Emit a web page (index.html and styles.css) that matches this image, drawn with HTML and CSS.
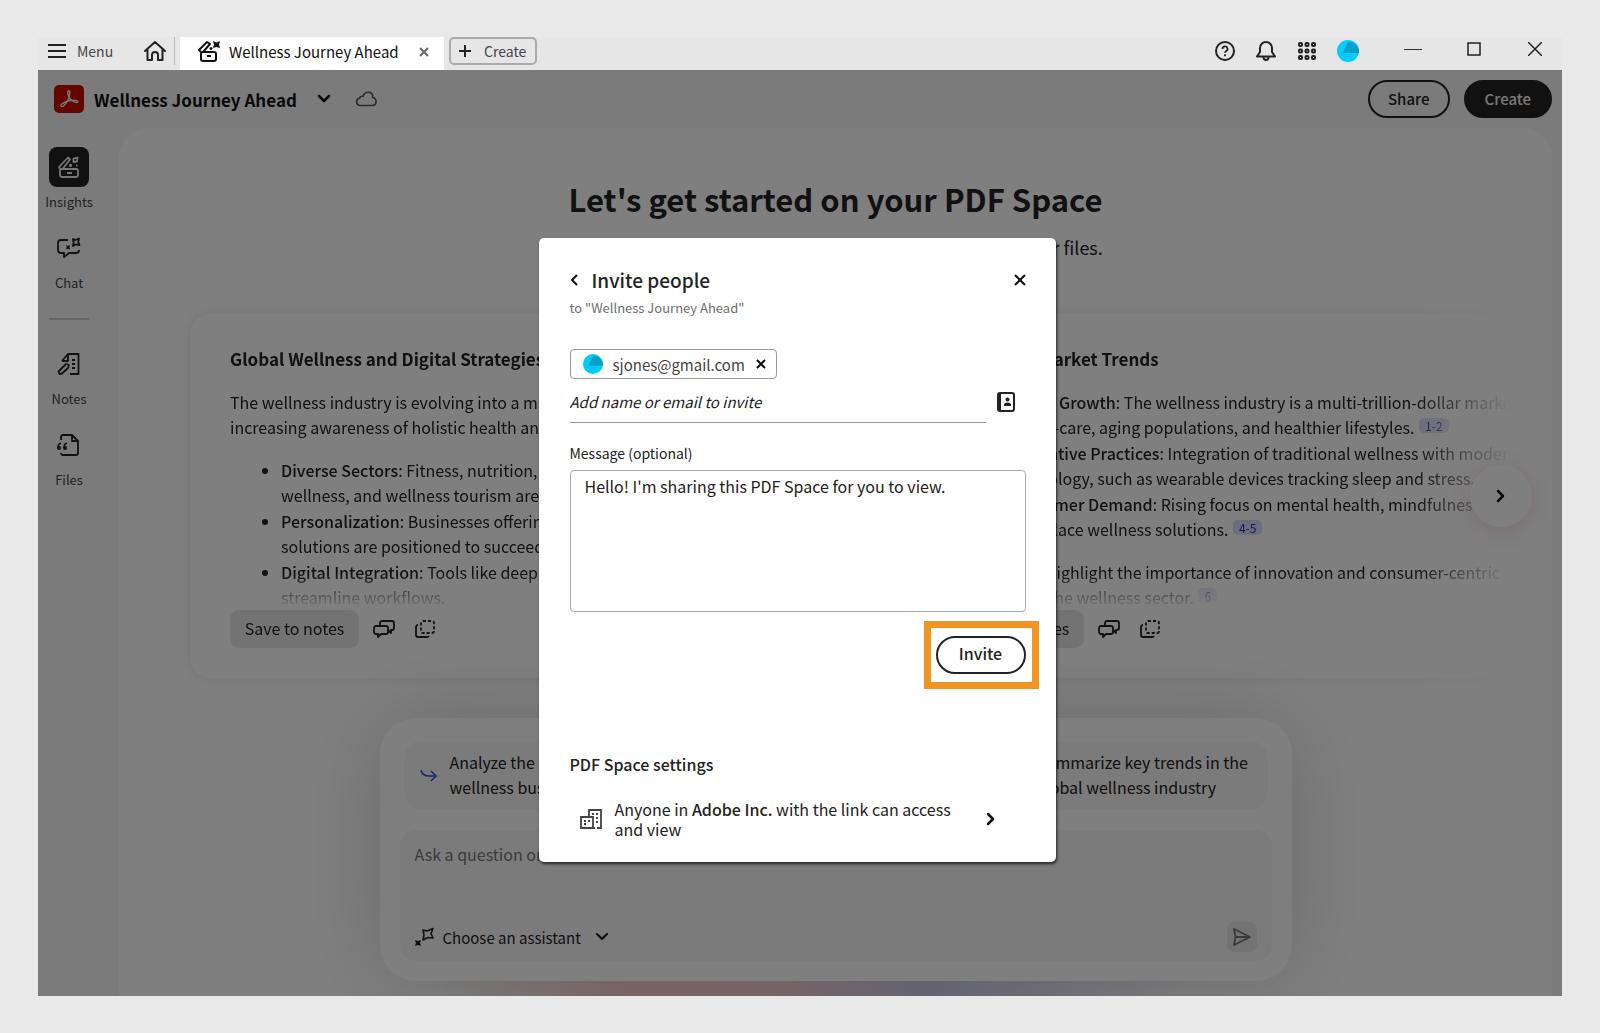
FILE: index.html
```html
<!DOCTYPE html>
<html lang="en">
<head>
    <meta charset="UTF-8">
    <meta name="viewport" content="width=device-width, initial-scale=1.0">
    <title>Wellness Journey Ahead</title>
    <link rel="stylesheet" href="styles.css">
</head>
<body>
    <div class="window">
        <!-- Title bar -->
        <header class="titlebar">
            <button class="menu-btn">
                <svg width="18" height="16" viewBox="0 0 18 16" stroke="#222" stroke-width="2"><path d="M0 2h18M0 8h18M0 14h18"/></svg>
                Menu
            </button>
            <button class="home-btn" aria-label="Home">
                <svg width="24" height="22" viewBox="0 0 24 22" fill="none" stroke="#222" stroke-width="2" stroke-linejoin="round" stroke-linecap="round"><path d="M2 11L12 2l10 9M4.500 9.500V20H9v-5a3 3 0 0 1 6 0v5h4.500V9.500"/></svg>
            </button>
            <div class="tab">
                <svg width="24" height="24" viewBox="0 0 24 24" fill="none" stroke="#111" stroke-width="2" stroke-linejoin="round"><rect x="4" y="12" width="15" height="9" rx="2"/><path d="M10 16h4M4 12L2 10 10 2l3 2-7 8"/><path d="M16 1l3.500 1.500L23 1l-1 3.500L23 8l-3.500-1L16 8l1-3.500z" fill="#111" stroke="none"/><circle cx="14" cy="8.500" r="1.500" fill="#111" stroke="none"/></svg>
                <span>Wellness Journey Ahead</span>
                <button aria-label="Close tab">
                    <svg width="10" height="10" viewBox="0 0 10 10" stroke="#666" stroke-width="2"><path d="M1 1l8 8M9 1L1 9"/></svg>
                </button>
            </div>
            <button class="new-btn">
                <svg width="12" height="12" viewBox="0 0 12 12" stroke="#222" stroke-width="2"><path d="M6 0v12M0 6h12"/></svg>
                Create
            </button>
            <div class="tools">
                <button aria-label="Help">
                    <svg width="22" height="22" viewBox="0 0 22 22" fill="none" stroke="#222" stroke-width="2"><circle cx="11" cy="11" r="9"/><path d="M8.500 9a2.500 2.500 0 1 1 3.500 2.200q-1 .5-1 1.600M11 14.200v2" stroke-width="1.800"/></svg>
                </button>
                <button aria-label="Notifications">
                    <svg width="20" height="22" viewBox="0 0 20 22" fill="none" stroke="#222" stroke-width="2" stroke-linejoin="round"><path d="M4 12V8a6 6 0 0 1 12 0v4l3 4.500H1z"/><path d="M7.500 17a2.500 3 0 0 0 5 0"/></svg>
                </button>
                <button aria-label="Apps">
                    <svg width="18" height="18" viewBox="0 0 18 18" fill="none" stroke="#222" stroke-width="2"><rect x="1" y="1" width="3" height="3" rx="1"/><rect x="7.500" y="1" width="3" height="3" rx="1"/><rect x="14" y="1" width="3" height="3" rx="1"/><rect x="1" y="7.500" width="3" height="3" rx="1"/><rect x="7.500" y="7.500" width="3" height="3" rx="1"/><rect x="14" y="7.500" width="3" height="3" rx="1"/><rect x="1" y="14" width="3" height="3" rx="1"/><rect x="7.500" y="14" width="3" height="3" rx="1"/><rect x="14" y="14" width="3" height="3" rx="1"/></svg>
                </button>
                <button aria-label="Account">
                    <svg width="22" height="22" viewBox="0 0 22 22"><circle cx="11" cy="11" r="11" fill="#00cbfa"/><path d="M6 13l4-9q1-2 3-2l3 1q7 4 6 10z" fill="#089fc8"/></svg>
                </button>
            </div>
            <div class="win-controls">
                <button aria-label="Minimize"><svg width="18" height="14" viewBox="0 0 18 14" stroke="#333"><path d="M0 7.500h18"/></svg></button>
                <button aria-label="Maximize"><svg width="14" height="14" viewBox="0 0 14 14" fill="none" stroke="#222" stroke-width="1.500"><rect x="1" y="1" width="12" height="12"/></svg></button>
                <button aria-label="Close"><svg width="14" height="14" viewBox="0 0 14 14" stroke="#222" stroke-width="1.500"><path d="M0 0l14 14M14 0L0 14"/></svg></button>
            </div>
        </header>

        <div class="app">
            <!-- Document header -->
            <div class="doc-header">
                <svg class="logo" width="30" height="28" viewBox="0 0 30 28"><rect width="30" height="28" rx="5" fill="#c80a00"/><path d="M7 21c-1-2 6-5 9-5.500 3-.5 8-.3 7.800 1.300-.2 2-5.800-.3-8.300-3.800-2-3-2.300-7-.7-7.200 1.700-.2 1.200 4-.3 8C13 17.500 8.500 23.500 7 21z" fill="none" stroke="#eee" stroke-width="1.400"/></svg>
                <h1>Wellness Journey Ahead</h1>
                <button class="icon-btn" aria-label="Document options">
                    <svg width="14" height="10" viewBox="0 0 14 10" fill="none" stroke="#111" stroke-width="2.500" stroke-linecap="round" stroke-linejoin="round"><path d="M2 2l5 5 5-5"/></svg>
                </button>
                <svg class="cloud" width="22" height="16" viewBox="0 0 22 16" fill="none" stroke="#555" stroke-width="1.600"><path d="M5 14.500a3.700 3.700 0 0 1-.5-7.300Q5 5 8 5.300C9 2 12 1 14 1.300c3 .6 4 3 3.600 5.200 2 .2 3.400 1.800 3.400 3.900 0 2.400-1.600 4.100-3.800 4.100z"/></svg>
                <button class="pill">Share</button>
                <button class="pill solid">Create</button>
            </div>

            <div class="app-body">
                <!-- Sidebar -->
                <nav class="sidebar">
                    <a class="nav-item active" href="#insights">
                        <span class="nav-icon"><svg width="24" height="24" viewBox="0 0 24 24" fill="none" stroke="#eee" stroke-width="1.800" stroke-linejoin="round"><rect x="3" y="14" width="18" height="8" rx="2"/><path d="M10 18h5M3 14l-1-2L11 2.500l2 2L5.500 14"/><path d="M16.500 3.500l4-1-.5 4-3.500.5z"/><path d="M12 10.500h3M13.500 9v3M19 10.500h1.500"/></svg></span>
                        Insights
                    </a>
                    <a class="nav-item" href="#chat">
                        <span class="nav-icon"><svg width="24" height="24" viewBox="0 0 24 24" fill="none" stroke="#222" stroke-width="1.800" stroke-linejoin="round"><path d="M11 4H4a3 3 0 0 0-3 3v7a3 3 0 0 0 3 3h3v4l5-4h7a3 3 0 0 0 3-3"/><path d="M16 3l2.500 1L22 2.500l-.8 3.500 1.300 3-3.500-.7L16 10l.6-3.500z"/><path d="M9 9l2 1 2-1-.5 2.500.5 2-2-.7-2 .7.700-2z" fill="#222" stroke="none"/></svg></span>
                        Chat
                    </a>
                    <hr>
                    <a class="nav-item" href="#notes">
                        <span class="nav-icon"><svg width="24" height="24" viewBox="0 0 24 24" fill="none" stroke="#222" stroke-width="1.800" stroke-linejoin="round"><path d="M5 9l6-7h10.500v20H13M11 2v7H5M15 8h3M15 12h3M15 16h3"/><path d="M2.500 22l-1-2.500L9 12l3 1-1 3-6 5.500z"/></svg></span>
                        Notes
                    </a>
                    <a class="nav-item" href="#files">
                        <span class="nav-icon"><svg width="24" height="24" viewBox="0 0 24 24" fill="none" stroke="#222" stroke-width="1.800" stroke-linejoin="round"><path d="M4 7V4a2 2 0 0 1 2-2h9l6 6v12a2 2 0 0 1-2 2H6a2 2 0 0 1-2-2M15 2v6h6"/><path d="M1 15v-1q0-3 3-4M7 15v-1q0-3 3-4" stroke-width="1.500"/><circle cx="2" cy="15" r="2" fill="#222" stroke="none"/><circle cx="8" cy="15" r="2" fill="#222" stroke="none"/></svg></span>
                        Files
                    </a>
                </nav>

                <!-- Workspace -->
                <main class="panel">
                    <h2>Let's get started on your PDF Space</h2>
                    <p class="subtitle">These are some quick insights to help you understand your files.</p>

                    <div class="carousel">
                        <div class="track">
                            <article class="card">
                                <h3>Global Wellness and Digital Strategies</h3>
                                <div class="card-text">
                                    <p>The wellness industry is evolving into a multi-trillion-dollar market with<br>increasing awareness of holistic health and prevention.</p>
                                    <ul>
                                        <li><b>Diverse Sectors</b>: Fitness, nutrition, mental health, workplace<br>wellness, and wellness tourism are thriving.</li>
                                        <li><b>Personalization</b>: Businesses offering tailored wellness<br>solutions are positioned to succeed.</li>
                                        <li><b>Digital Integration</b>: Tools like deep research help teams<br>streamline workflows.</li>
                                    </ul>
                                </div>
                                <div class="card-actions">
                                    <button class="save-btn">Save to notes</button>
                                    <button class="icon-btn" aria-label="Discuss"><svg width="22" height="20" viewBox="0 0 22 20" fill="none" stroke="#222" stroke-width="1.800" stroke-linejoin="round"><path d="M7 6V4a2 2 0 0 1 2-2h10a2 2 0 0 1 2 2v5a2 2 0 0 1-2 2h-1v3l-3-3"/><path d="M3 7h10a2 2 0 0 1 2 2v4a2 2 0 0 1-2 2H8l-3 3v-3H3a2 2 0 0 1-2-2V9a2 2 0 0 1 2-2z"/></svg></button>
                                    <button class="icon-btn" aria-label="Copy"><svg width="20" height="20" viewBox="0 0 20 20" fill="none" stroke="#222" stroke-width="1.800"><rect x="6" y="2" width="13" height="12" rx="2" stroke-dasharray="3 2"/><path d="M3 6a2 2 0 0 0-2 2v8a2 2 0 0 0 2 2h9a2 2 0 0 0 2-1"/></svg></button>
                                </div>
                            </article>

                            <article class="card">
                                <h3>Emerging Market Trends</h3>
                                <div class="card-text">
                                    <ul>
                                        <li><b>Sector Growth</b>: The wellness industry is a multi-trillion-dollar market,<br>by self-care, aging populations, and healthier lifestyles. <a class="cite" href="#1">1-2</a></li>
                                        <li><b>Innovative Practices</b>: Integration of traditional wellness with modern<br>technology, such as wearable devices tracking sleep and stress. <a class="cite" href="#3">3</a></li>
                                        <li><b>Consumer Demand</b>: Rising focus on mental health, mindfulness,<br>workplace wellness solutions. <a class="cite" href="#4">4-5</a></li>
                                    </ul>
                                    <p>These areas highlight the importance of innovation and consumer-centric<br>strategies in the wellness sector. <a class="cite" href="#6">6</a></p>
                                </div>
                                <div class="card-actions">
                                    <button class="save-btn">Save to notes</button>
                                    <button class="icon-btn" aria-label="Discuss"><svg width="22" height="20" viewBox="0 0 22 20" fill="none" stroke="#222" stroke-width="1.800" stroke-linejoin="round"><path d="M7 6V4a2 2 0 0 1 2-2h10a2 2 0 0 1 2 2v5a2 2 0 0 1-2 2h-1v3l-3-3"/><path d="M3 7h10a2 2 0 0 1 2 2v4a2 2 0 0 1-2 2H8l-3 3v-3H3a2 2 0 0 1-2-2V9a2 2 0 0 1 2-2z"/></svg></button>
                                    <button class="icon-btn" aria-label="Copy"><svg width="20" height="20" viewBox="0 0 20 20" fill="none" stroke="#222" stroke-width="1.800"><rect x="6" y="2" width="13" height="12" rx="2" stroke-dasharray="3 2"/><path d="M3 6a2 2 0 0 0-2 2v8a2 2 0 0 0 2 2h9a2 2 0 0 0 2-1"/></svg></button>
                                </div>
                            </article>
                        </div>
                        <button class="next-btn" aria-label="Next">
                            <svg width="10" height="16" viewBox="0 0 10 16" fill="none" stroke="#111" stroke-width="2.500" stroke-linecap="round" stroke-linejoin="round"><path d="M2 3l5 5-5 5"/></svg>
                        </button>
                    </div>

                    <!-- Assistant -->
                    <section class="chat">
                        <div class="suggestions">
                            <button>
                                <svg width="18" height="14" viewBox="0 0 18 14" fill="none" stroke="#3b4bdc" stroke-width="1.600"><path d="M1 2q1 6 8 6h7M11 3l5 5-5 5"/></svg>
                                <span>Analyze the global<br>wellness business</span>
                            </button>
                            <button>
                                <svg width="18" height="14" viewBox="0 0 18 14" fill="none" stroke="#3b4bdc" stroke-width="1.600"><path d="M1 2q1 6 8 6h7M11 3l5 5-5 5"/></svg>
                                <span>Compare strategies<br>for digital growth</span>
                            </button>
                            <button>
                                <svg width="18" height="14" viewBox="0 0 18 14" fill="none" stroke="#3b4bdc" stroke-width="1.600"><path d="M1 2q1 6 8 6h7M11 3l5 5-5 5"/></svg>
                                <span>Summarize key trends in the<br>global wellness industry</span>
                            </button>
                        </div>
                        <div class="ask">
                            <input type="text" aria-label="Ask a question" placeholder="Ask a question or choose a task">
                            <div class="ask-bar">
                                <button class="assistant">
                                    <svg width="20" height="20" viewBox="0 0 20 20" fill="none" stroke="#222" stroke-width="1.600" stroke-linejoin="round"><path d="M8 3l4 1 6-2.500-2 5 2 4.500-5-.5-5 2.500 1-5z"/><path d="M0 13l3 1 3-1-1 3 1 3-3-1-3 1 1-3z" fill="#222" stroke="none"/></svg>
                                    Choose an assistant
                                    <svg width="14" height="10" viewBox="0 0 14 10" fill="none" stroke="#111" stroke-width="2" stroke-linecap="round" stroke-linejoin="round"><path d="M2 2l5 5 5-5"/></svg>
                                </button>
                                <button class="send" aria-label="Send">
                                    <svg width="20" height="20" viewBox="0 0 20 20" fill="none" stroke="#777" stroke-width="1.800" stroke-linejoin="round"><path d="M2 2l16 8-16 8 1.500-8zM3.500 10H18"/></svg>
                                </button>
                            </div>
                        </div>
                    </section>
                </main>
            </div>

            <!-- Invite dialog -->
            <div class="overlay">
                <div class="dialog" role="dialog" aria-labelledby="dialog-title">
                    <div class="dialog-head">
                        <button aria-label="Back"><svg width="9" height="12" viewBox="0 0 9 12" fill="none" stroke="#111" stroke-width="2" stroke-linecap="round" stroke-linejoin="round"><path d="M6.500 1.500L2 6l4.500 4.500"/></svg></button>
                        <h2 id="dialog-title">Invite people</h2>
                        <button aria-label="Close"><svg width="12" height="12" viewBox="0 0 12 12" stroke="#111" stroke-width="2"><path d="M1 1l10 10M11 1L1 11"/></svg></button>
                    </div>
                    <p class="dialog-sub">to "Wellness Journey Ahead"</p>

                    <div class="chip">
                        <svg width="20" height="20" viewBox="0 0 22 22"><circle cx="11" cy="11" r="11" fill="#00cbfa"/><path d="M6 13l4-9q1-2 3-2l3 1q7 4 6 10z" fill="#089fc8"/></svg>
                        <span>sjones@gmail.com</span>
                        <button aria-label="Remove"><svg width="10" height="10" viewBox="0 0 10 10" stroke="#111" stroke-width="2"><path d="M1 1l8 8M9 1L1 9"/></svg></button>
                    </div>
                    <div class="email-row">
                        <input type="text" aria-label="Add name or email to invite" placeholder="Add name or email to invite">
                        <button aria-label="Address book"><svg width="18" height="20" viewBox="0 0 18 20" fill="none" stroke="#222" stroke-width="2"><rect x="1" y="1" width="16" height="18" rx="2"/><path d="M3 1v18"/><circle cx="10.500" cy="7.500" r="2" fill="#222" stroke="none"/><path d="M7 14v-1q0-2.500 3.500-2.500T14 13v1z" fill="#222" stroke="none"/></svg></button>
                    </div>

                    <label for="message">Message (optional)</label>
                    <textarea id="message">Hello! I'm sharing this PDF Space for you to view.</textarea>

                    <div class="invite-row">
                        <div class="highlight"><button class="pill">Invite</button></div>
                    </div>

                    <h3>PDF Space settings</h3>
                    <button class="access">
                        <svg width="22" height="20" viewBox="0 0 22 20" fill="none" stroke="#444" stroke-width="1.800"><path d="M9 8V1h12v18h-4M1 8h12v11H1zM13 19h2"/><path d="M12 5h2M16 5h2M16 9h2M16 13h2M4 12h2M8 12h2M4 15h2" stroke-width="2"/></svg>
                        <span>Anyone in <b>Adobe Inc.</b> with the link can access and view</span>
                        <svg width="10" height="14" viewBox="0 0 10 14" fill="none" stroke="#111" stroke-width="2.500" stroke-linecap="round" stroke-linejoin="round"><path d="M2 2l5 5-5 5"/></svg>
                    </button>
                </div>
            </div>
        </div>
    </div>
</body>
</html>
```
FILE: styles.css
```css
/* Global Styles */
:root {
    --page: #e9e9e9;
    --bar: #e6e6e6;
    --app: #f7f7f7;
    --panel: #ffffff;
    --text: #222222;
    --muted: #6e6e6e;
    --line: #999999;
    --highlight: #f09423;
}

* {
    box-sizing: border-box;
}

body {
    margin: 0;
    height: 100vh;
    padding: 37px 38px;
    background-color: var(--page);
    color: var(--text);
    font-family: "Noto Sans CJK SC", "Noto Sans", sans-serif;
    font-size: 16px;
    line-height: 25px;
}

h1, h2, h3, p, ul {
    margin: 0;
}

button, input, textarea {
    font: inherit;
    color: inherit;
    border: none;
    padding: 0;
    background: none;
}

a {
    color: inherit;
    text-decoration: none;
}

svg {
    display: block;
    flex-shrink: 0;
}

.window {
    display: flex;
    flex-direction: column;
    height: 100%;
}

/* Title bar */
.titlebar {
    display: flex;
    align-items: flex-start;
    height: 33px;
    flex-shrink: 0;
    background-color: var(--bar);
}

.menu-btn {
    display: flex;
    align-items: center;
    gap: 11px;
    padding: 0 10px;
    width: 96px;
    height: 28px;
    font-size: 14px;
    color: #444;
}

.home-btn {
    display: flex;
    align-items: center;
    justify-content: center;
    width: 41px;
    height: 28px;
    padding-left: 2px;
    border-right: 1px solid #bbb;
}

.tab {
    display: flex;
    align-items: center;
    height: 33px;
    margin-left: 5px;
    padding: 0 15px 4px 17px;
    background-color: #fff;
    color: #111;
    font-size: 15px;
}

.tab span {
    margin: 0 20px 0 8px;
}

.new-btn {
    display: flex;
    align-items: center;
    justify-content: center;
    gap: 13px;
    width: 88px;
    height: 28px;
    margin-left: 5px;
    border: 2px solid #aaa;
    border-radius: 5px;
    font-size: 14px;
    color: #444;
}

.tools {
    display: flex;
    margin-left: auto;
}

.tools button {
    display: flex;
    justify-content: center;
    align-items: center;
    width: 41px;
    height: 28px;
}

.win-controls {
    display: flex;
    gap: 7px;
    margin-left: 18px;
}

.win-controls button {
    display: flex;
    justify-content: center;
    align-items: center;
    width: 54px;
    height: 24px;
}

/* App */
.app {
    position: relative;
    display: flex;
    flex-direction: column;
    flex: 1;
    min-height: 0;
    background-color: var(--app);
}

.doc-header {
    display: flex;
    align-items: center;
    height: 58px;
    flex-shrink: 0;
    padding: 0 10px 0 16px;
}

.doc-header h1 {
    margin: 0 20px 0 10px;
    font-size: 17px;
    color: #111;
}

.cloud {
    margin: 0 auto 0 24px;
}

.pill {
    height: 38px;
    padding: 0 18px 2px;
    border: 2px solid var(--text);
    border-radius: 19px;
    font-size: 15px;
    font-weight: 500;
}

.pill.solid {
    margin-left: 14px;
    padding: 0 19px 2px;
    background-color: var(--text);
    color: #eee;
}

.app-body {
    display: flex;
    flex: 1;
    min-height: 0;
}

/* Sidebar */
.sidebar {
    display: flex;
    flex-direction: column;
    gap: 16px;
    width: 81px;
    flex-shrink: 0;
    padding: 19px 19px 0 0;
    font-size: 13px;
    line-height: 20px;
    color: #444;
}

.nav-item {
    display: flex;
    flex-direction: column;
    align-items: center;
    gap: 5px;
}

.nav-icon {
    display: flex;
    align-items: center;
    justify-content: center;
    width: 40px;
    height: 40px;
    border-radius: 8px;
}

.nav-item.active .nav-icon {
    background-color: var(--text);
}

.sidebar hr {
    width: 40px;
    margin: 9px auto 8px;
    border: none;
    border-top: 2px solid #ccc;
}

/* Workspace */
.panel {
    display: flex;
    flex-direction: column;
    flex: 1;
    min-width: 0;
    margin-right: 10px;
    overflow: hidden;
    background-color: var(--panel);
    border-radius: 30px 30px 0 0;
}

.panel h2 {
    margin-top: 49px;
    font-size: 31px;
    line-height: 44px;
    text-align: center;
}

.subtitle {
    margin-top: 12px;
    font-size: 18px;
    line-height: 28px;
    text-align: center;
}

.carousel {
    position: relative;
    flex-shrink: 0;
    margin-top: 33px;
}

.track {
    display: flex;
    gap: 20px;
    padding: 20px 0 20px 71px;
    overflow: hidden;
    -webkit-mask-image: linear-gradient(to left, transparent 40px, #000 140px);
    mask-image: linear-gradient(to left, transparent 40px, #000 140px);
}

.card {
    width: 705px;
    flex-shrink: 0;
    padding: 33px 40px 30px;
    border-radius: 20px;
    box-shadow: 0 0 12px rgba(0, 0, 0, 0.1);
}

.card h3 {
    font-size: 17px;
    line-height: 24px;
}

.card-text {
    height: 220px;
    margin-top: 19px;
    overflow: hidden;
    white-space: nowrap;
    -webkit-mask-image: linear-gradient(to top, transparent, #000 36px);
    mask-image: linear-gradient(to top, transparent, #000 36px);
}

.card-text ul {
    padding-left: 51px;
}

.card-text p + ul,
.card-text ul + p {
    margin-top: 18px;
}

.card-text li {
    margin-bottom: 1px;
}

.card-text b {
    font-weight: 500;
}

.cite {
    display: inline-block;
    margin-left: 1px;
    padding: 0 6px;
    border-radius: 5px;
    background-color: #dadafa;
    color: #2c2ca0;
    font-size: 12px;
    line-height: 15px;
    vertical-align: 3px;
}

.card-actions {
    display: flex;
    align-items: center;
    gap: 20px;
}

.card-actions .save-btn {
    width: 129px;
    height: 38px;
    margin-right: -6px;
    padding-bottom: 2px;
    border-radius: 9px;
    background-color: #e6e6e6;
}

.next-btn {
    position: absolute;
    top: 171px;
    right: 20px;
    display: flex;
    align-items: center;
    justify-content: center;
    width: 62px;
    height: 62px;
    border-radius: 50%;
    background-color: #fff;
    box-shadow: 0 4px 24px rgba(190, 60, 80, 0.18);
}

/* Assistant */
.chat {
    position: relative;
    width: 912px;
    flex-shrink: 0;
    margin: 20px auto 0;
    padding: 23px 20px 20px;
    border-radius: 36px;
    background-color: #fff;
    box-shadow: 0 0 80px rgba(0, 0, 0, 0.16);
}

.chat::after {
    content: "";
    position: absolute;
    left: 60px;
    right: 100px;
    top: 100%;
    height: 24px;
    background: linear-gradient(to right, transparent, #f3b8b8 25%, #eab8c0 45%, #b8b4e0 65%, transparent);
    opacity: 0.7;
}

.suggestions {
    display: grid;
    grid-template-columns: repeat(3, 1fr);
    gap: 16px;
    margin: 0 4px 20px;
}

.suggestions button {
    display: flex;
    align-items: center;
    gap: 12px;
    padding: 9px 16px 10px;
    border-radius: 18px;
    background-color: var(--app);
    text-align: left;
    white-space: nowrap;
}

.ask {
    padding: 10px 15px 9px;
    border-radius: 16px;
    background-color: var(--app);
}

.ask input {
    display: block;
    width: 100%;
    height: 28px;
}

.ask input::placeholder {
    color: #777;
    opacity: 1;
}

.ask-bar {
    display: flex;
    align-items: center;
    justify-content: space-between;
    margin-top: 54px;
}

.assistant {
    display: flex;
    align-items: center;
    gap: 8px;
    font-size: 15px;
}

.assistant svg:last-child {
    margin-left: 6px;
}

.send {
    display: flex;
    align-items: center;
    justify-content: center;
    width: 30px;
    height: 30px;
    border-radius: 7px;
    background-color: #e6e6e6;
}

/* Invite dialog */
.overlay {
    position: absolute;
    inset: 0;
    display: flex;
    justify-content: center;
    align-items: flex-start;
    padding: 168px 6px 0 0;
    background-color: rgba(0, 0, 0, 0.5);
}

.dialog {
    width: 517px;
    padding: 29px 30px 23px 31px;
    border-radius: 5px;
    background-color: #fff;
    box-shadow: 1px 2px 3px rgba(0, 0, 0, 0.7);
}

.dialog-head {
    display: flex;
    align-items: center;
    gap: 13px;
}

.dialog-head h2 {
    flex: 1;
    font-size: 19px;
    font-weight: 500;
}

.dialog-sub {
    margin-top: 6px;
    font-size: 13px;
    line-height: 20px;
    color: var(--muted);
}

.chip {
    display: flex;
    align-items: center;
    width: fit-content;
    height: 30px;
    margin-top: 31px;
    padding: 0 10px 0 12px;
    border: 1px solid var(--line);
    border-radius: 4px;
    color: #444;
    font-size: 15px;
}

.chip span {
    margin: 0 11px 0 10px;
}

.email-row {
    display: flex;
    align-items: center;
    gap: 11px;
    margin-top: 2px;
}

.email-row input {
    flex: 1;
    height: 42px;
    border-bottom: 1px solid var(--line);
    font-size: 15px;
    font-style: italic;
}

.email-row input::placeholder {
    color: var(--text);
    opacity: 1;
}

.email-row button {
    margin-right: 11px;
}

.dialog label {
    display: block;
    margin-top: 20px;
    font-size: 14px;
    line-height: 20px;
}

.dialog textarea {
    display: block;
    width: 100%;
    height: 142px;
    margin-top: 7px;
    padding: 3px 14px;
    border: 1px solid #aaa;
    border-radius: 4px;
    resize: none;
}

.invite-row {
    display: flex;
    justify-content: flex-end;
    margin-top: 24px;
}

.invite-row .pill {
    width: 90px;
    padding: 0 0 4px;
    font-size: 16px;
}

.highlight {
    position: relative;
}

.highlight::before {
    content: "";
    position: absolute;
    inset: -15px -13px -15px -12px;
    border: 7px solid var(--highlight);
    pointer-events: none;
}

.dialog h3 {
    margin-top: 78px;
    font-size: 16px;
    font-weight: 500;
}

.access {
    display: flex;
    align-items: center;
    width: 100%;
    margin-top: 22px;
    padding: 0 30px 0 10px;
    line-height: 20px;
    text-align: left;
}

.access span {
    flex: 1;
    margin: 0 20px 0 13px;
}

.access b {
    font-weight: 500;
}
```
